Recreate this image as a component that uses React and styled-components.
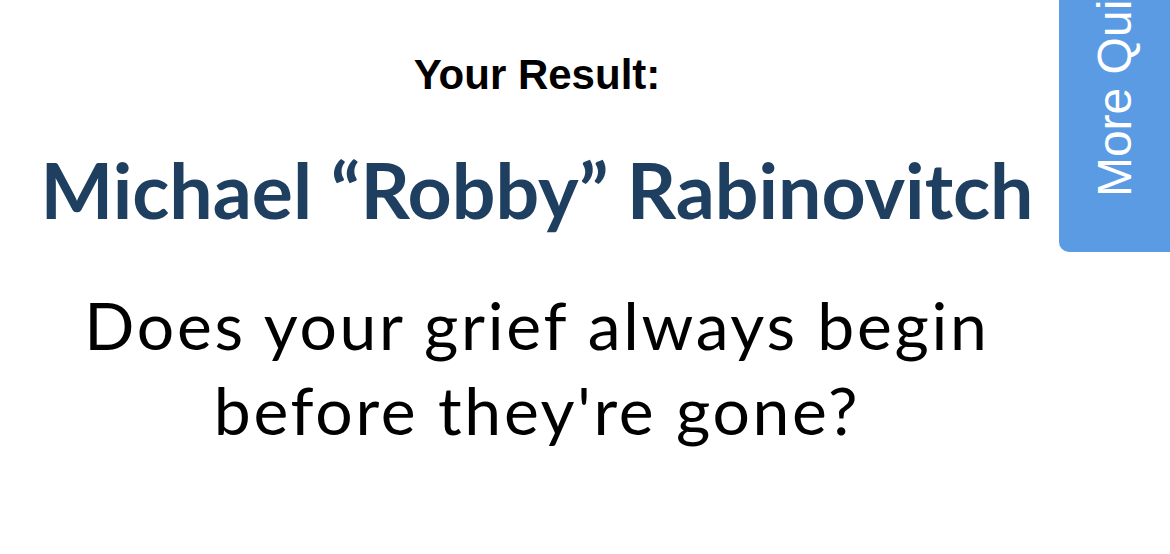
import React from "react";
import styled, { createGlobalStyle } from "styled-components";

const Global = createGlobalStyle`
  html, body { margin: 0; padding: 0; background: #ffffff; }
  body { width: 1170px; height: 554px; overflow: hidden; }
`;

const Page = styled.main`
  box-sizing: border-box;
  width: 1170px;
  height: 554px;
  padding: 51px 96px 0 0;
  display: flex;
  flex-direction: column;
  align-items: center;
  text-align: center;
`;

const Label = styled.h3`
  margin: 0;
  font-family: "Liberation Sans", Arial, sans-serif;
  font-weight: 700;
  font-size: 42px;
  line-height: 48px;
  color: #000;
`;

const Title = styled.h1`
  margin: 45px 0 0;
  font-family: "Lato", sans-serif;
  font-weight: 700;
  font-size: 77px;
  line-height: 90px;
  color: #1f3f60;
  white-space: nowrap;
`;

const Body = styled.p`
  margin: 48px 0 0;
  max-width: 940px;
  font-family: "Lato", sans-serif;
  font-weight: 400;
  font-size: 66px;
  letter-spacing: 2.7px;
  line-height: 85px;
  color: #000;
`;

const Tab = styled.aside`
  position: fixed;
  top: 0;
  right: 0;
  width: 111px;
  height: 252px;
  box-sizing: border-box;
  padding-bottom: 55px;
  background: #5b9be3;
  border-bottom-left-radius: 10px;
  overflow: hidden;
  display: flex;
  flex-direction: column;
  justify-content: flex-end;
  align-items: center;
`;

const TabText = styled.span`
  flex-shrink: 0;
  writing-mode: vertical-rl;
  transform: rotate(180deg);
  font-family: "Liberation Sans", Arial, sans-serif;
  font-size: 48px;
  line-height: 52px;
  color: #fff;
  white-space: nowrap;
`;

export default function App() {
  return (
    <>
      <Global />
      <Page>
        <Label>Your Result:</Label>
        <Title>Michael “Robby” Rabinovitch</Title>
        <Body>Does your grief always begin before they're gone?</Body>
      </Page>
      <Tab>
        <TabText>More Quizzes</TabText>
      </Tab>
    </>
  );
}
